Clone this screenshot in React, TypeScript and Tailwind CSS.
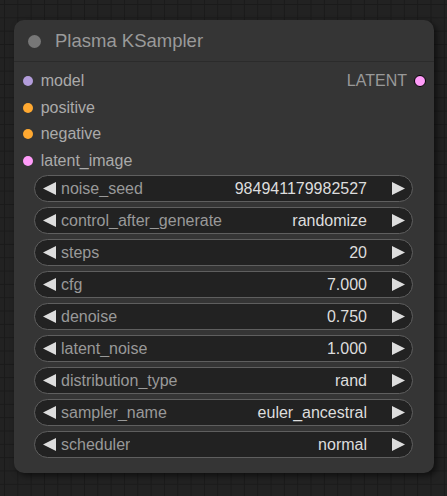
import React from 'react';

type Slot = { name: string; color: string };

const inputs: Slot[] = [
  { name: 'model', color: 'bg-[#b39ddb]' },
  { name: 'positive', color: 'bg-[#ffa931]' },
  { name: 'negative', color: 'bg-[#ffa931]' },
  { name: 'latent_image', color: 'bg-[#ff9cf9]' },
];

const widgets: [string, string][] = [
  ['noise_seed', '984941179982527'],
  ['control_after_generate', 'randomize'],
  ['steps', '20'],
  ['cfg', '7.000'],
  ['denoise', '0.750'],
  ['latent_noise', '1.000'],
  ['distribution_type', 'rand'],
  ['sampler_name', 'euler_ancestral'],
  ['scheduler', 'normal'],
];

function Arrow({ dir }: { dir: 'left' | 'right' }) {
  return (
    <svg width="13" height="13" viewBox="0 0 13 13" className="shrink-0">
      {dir === 'left' ? (
        <polygon points="13,0 13,13 0,6.5" fill="#dddddd" />
      ) : (
        <polygon points="0,0 0,13 13,6.5" fill="#dddddd" />
      )}
    </svg>
  );
}

function Widget({ label, value }: { label: string; value: string }) {
  return (
    <div className="h-[27px] rounded-full border border-[#5f5f5f] bg-[#222222] flex items-center pl-[8px] pr-[7px]">
      <Arrow dir="left" />
      <span className="ml-[5px] text-[#999999] truncate">{label}</span>
      <span className="ml-auto text-[#dddddd]">{value}</span>
      <span className="ml-[25px]">
        <Arrow dir="right" />
      </span>
    </div>
  );
}

export default function App() {
  return (
    <div
      className="w-[447px] h-[496px] overflow-hidden pl-[14px] pt-[20px] bg-[#222222] bg-[linear-gradient(to_right,#1a1a1a_1px,transparent_1px),linear-gradient(to_bottom,#1a1a1a_1px,transparent_1px)] bg-[size:13.333px_13.333px] bg-[position:4px_4px]"
      style={{ fontFamily: '"Liberation Sans", Arial, sans-serif' }}
    >
      <div className="w-[420px] rounded-[10px] bg-[#353535] shadow-[3px_3px_6px_rgba(0,0,0,0.55)] text-[16px] leading-none pb-[15px]">
        {/* Title */}
        <div className="h-[42px] border-b border-[#2b2b2b] flex items-center pl-[13.5px] pt-[1px]">
          <div className="w-[13px] h-[13px] rounded-full bg-[#777777]" />
          <span className="ml-[14.5px] pt-[1px] text-[18.5px] text-[#9a9a9a]">Plasma KSampler</span>
        </div>

        {/* Slots */}
        <div className="pt-[5.7px] pb-[0.7px]">
          {inputs.map((slot, i) => (
            <div key={slot.name} className="h-[26.67px] flex items-center pl-[8.7px] pr-[8px]">
              <div className={`w-[10px] h-[10px] rounded-full ${slot.color}`} />
              <span className="ml-[8px] text-[#aaaaaa]">{slot.name}</span>
              {i === 0 && (
                <>
                  <span className="ml-auto text-[#999999]">LATENT</span>
                  <div className="ml-[7px] w-[12px] h-[12px] rounded-full bg-[#ff9cf9] border border-black" />
                </>
              )}
            </div>
          ))}
        </div>

        {/* Widgets */}
        <div className="flex flex-col gap-[5px] pl-[20px] pr-[21px]">
          {widgets.map(([label, value]) => (
            <Widget key={label} label={label} value={value} />
          ))}
        </div>
      </div>
    </div>
  );
}
